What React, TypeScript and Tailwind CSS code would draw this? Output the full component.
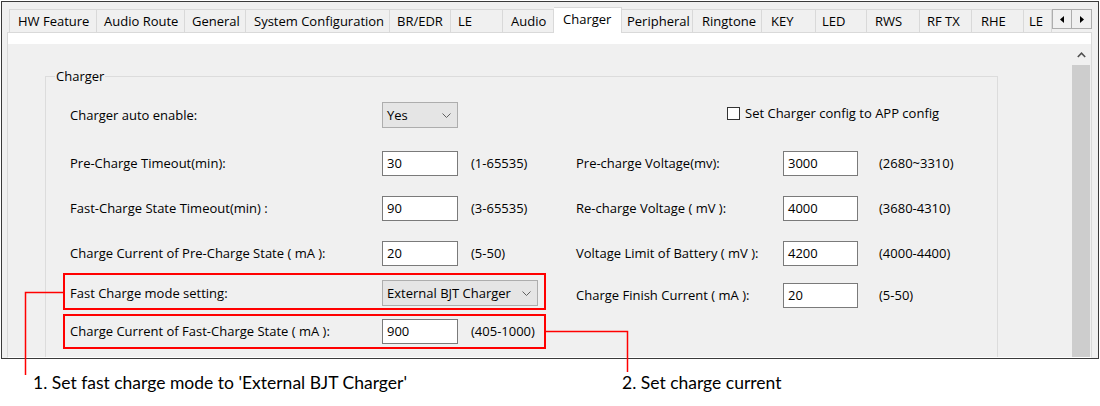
import React from "react";

const tabs: { label: string; cls: string }[] = [
  { label: "HW Feature", cls: "w-[88px] pl-[8px] border-l" },
  { label: "Audio Route", cls: "w-[88px] pl-[7px]" },
  { label: "General", cls: "w-[61px] pl-[7px]" },
  { label: "System Configuration", cls: "w-[144px] pl-[8px]" },
  { label: "BR/EDR", cls: "w-[61px] pl-[7px]" },
  { label: "LE", cls: "w-[52px] pl-[7px]" },
  { label: "Audio", cls: "w-[51px] pl-[8px]" },
];
const tabs2: { label: string; cls: string }[] = [
  { label: "Peripheral", cls: "w-[71px] pl-[5px]" },
  { label: "Ringtone", cls: "w-[69px] pl-[9px]" },
  { label: "KEY", cls: "w-[54px] pl-[9px]" },
  { label: "LED", cls: "w-[51px] pl-[6px]" },
  { label: "RWS", cls: "w-[53px] pl-[8px]" },
  { label: "RF TX", cls: "w-[52px] pl-[7px]" },
  { label: "RHE", cls: "w-[52px] pl-[9px]" },
  { label: "LE", cls: "w-[28px] pl-[5px]" },
];

function Tab({ label, cls }: { label: string; cls: string }) {
  return (
    <div
      className={`${cls} h-[23px] shrink-0 flex items-center overflow-hidden whitespace-nowrap border-t border-r border-[#d9d9d9] bg-[#f0f0f0]`}
    >
      {label}
    </div>
  );
}

function Input({ value, w }: { value: string; w: string }) {
  return (
    <div
      className={`${w} h-[25px] shrink-0 bg-white border border-[#7a7a7a] flex items-center pl-[4px]`}
    >
      {value}
    </div>
  );
}

function Combo({ value, w }: { value: string; w: string }) {
  return (
    <div
      className={`${w} h-[26px] shrink-0 bg-[#e5e5e5] border border-[#adadad] flex items-center justify-between pl-[4px] pr-[6px]`}
    >
      <span>{value}</span>
      <svg width="9" height="5" viewBox="0 0 9 5">
        <path d="M0.5 0.5 L4.5 4.5 L8.5 0.5" fill="none" stroke="#606060" strokeWidth="1" />
      </svg>
    </div>
  );
}

function Row({
  mt,
  label,
  value,
  range,
  rLabel,
  rValue,
  rRange,
}: {
  mt: string;
  label: string;
  value: string;
  range: string;
  rLabel: string;
  rValue: string;
  rRange: string;
}) {
  return (
    <div className={`${mt} flex items-center h-[25px] pl-[24px]`}>
      <div className="w-[312px] shrink-0">{label}</div>
      <div className="w-[194px] shrink-0 flex items-center">
        <Input value={value} w="w-[76px]" />
        <span className="ml-[13px]">{range}</span>
      </div>
      <div className="w-[207px] shrink-0">{rLabel}</div>
      <Input value={rValue} w="w-[75px]" />
      <span className="ml-[21px]">{rRange}</span>
    </div>
  );
}

export default function App() {
  return (
    <div className="relative w-[1100px] h-[406px] bg-white overflow-hidden text-black">
      {/* Window */}
      <div className="ml-[1px] mt-[1px] w-[1098px] h-[358px] border border-[#3a3a3a] bg-[#f0f0f0] flex flex-col font-['Open_Sans','Noto_Sans',sans-serif] text-[13px] leading-[17px]">
        {/* Tab strip */}
        <div className="h-[30px] shrink-0 flex items-end pl-[7px]">
          {tabs.map((t) => (
            <Tab key={t.label} label={t.label} cls={t.cls} />
          ))}
          <div className="relative z-10 w-[68px] h-[26px] -mb-[1px] shrink-0 flex items-center pb-[2px] pl-[9px] bg-white border-t border-r border-[#d9d9d9]">
            Charger
          </div>
          {tabs2.map((t, i) => (
            <Tab key={t.label + i} label={t.label} cls={t.cls} />
          ))}
          <div className="flex mb-[3px] shrink-0">
            <div className="w-[20px] h-[20px] border border-[#adadad] bg-[#f0f0f0] flex items-center justify-center">
              <svg width="4" height="7" viewBox="0 0 4 7">
                <path d="M4 0 L0 3.5 L4 7 Z" fill="#000" />
              </svg>
            </div>
            <div className="w-[20px] h-[20px] border-t border-r border-b border-[#adadad] bg-[#f0f0f0] flex items-center justify-center">
              <svg width="4" height="7" viewBox="0 0 4 7">
                <path d="M0 0 L4 3.5 L0 7 Z" fill="#000" />
              </svg>
            </div>
          </div>
        </div>

        {/* Tab panel */}
        <div className="ml-[5px] w-[1085px] flex-1 flex flex-col border-t border-l border-r border-b border-[#d9d9d9] border-b-white overflow-hidden">
          <div className="h-[11px] shrink-0 bg-white" />
          <div className="flex-1 flex overflow-hidden">
            {/* Form area */}
            <div className="flex-1 overflow-hidden">
              <fieldset className="ml-[37px] mt-[24px] w-[953px] h-[330px] border border-[#dcdcdc]">
                <legend className="ml-[9px] px-[1px] leading-[16px]">Charger</legend>
                <div className="pt-[18px]">
                  {/* Row 1 */}
                  <div className="flex items-center h-[26px] pl-[24px]">
                    <div className="w-[312px] shrink-0">Charger auto enable:</div>
                    <Combo value="Yes" w="w-[76px]" />
                    <div className="ml-[269px] self-start mt-[3px] flex items-center">
                      <div className="w-[13px] h-[13px] border border-[#333333] bg-white" />
                      <span className="ml-[5px]">Set Charger config to APP config</span>
                    </div>
                  </div>
                  <Row
                    mt="mt-[23px]"
                    label="Pre-Charge Timeout(min):"
                    value="30"
                    range="(1-65535)"
                    rLabel="Pre-charge Voltage(mv):"
                    rValue="3000"
                    rRange="(2680~3310)"
                  />
                  <Row
                    mt="mt-[20px]"
                    label="Fast-Charge State Timeout(min) :"
                    value="90"
                    range="(3-65535)"
                    rLabel="Re-charge Voltage ( mV ):"
                    rValue="4000"
                    rRange="(3680-4310)"
                  />
                  <Row
                    mt="mt-[20px]"
                    label="Charge Current of Pre-Charge State ( mA ):"
                    value="20"
                    range="(5-50)"
                    rLabel="Voltage Limit of Battery ( mV ):"
                    rValue="4200"
                    rRange="(4000-4400)"
                  />
                  {/* Row 5 */}
                  <div className="mt-[7px] flex items-start pl-[17px]">
                    <div className="w-[483px] h-[37px] shrink-0 border-2 border-[#ff0000] flex items-center pt-[3px] pl-[5px]">
                      <div className="w-[312px] shrink-0">Fast Charge mode setting:</div>
                      <Combo value="External BJT Charger" w="w-[156px]" />
                    </div>
                    <div className="mt-[10px] flex items-center">
                      <div className="ml-[30px] w-[207px] shrink-0">Charge Finish Current ( mA ):</div>
                      <Input value="20" w="w-[75px]" />
                      <span className="ml-[21px]">(5-50)</span>
                    </div>
                  </div>
                  {/* Row 6 */}
                  <div className="mt-[4px] flex items-center pl-[17px]">
                    <div className="w-[483px] h-[35px] shrink-0 border-2 border-[#ff0000] flex items-center pl-[5px]">
                      <div className="w-[312px] shrink-0">Charge Current of Fast-Charge State ( mA ):</div>
                      <Input value="900" w="w-[76px]" />
                      <span className="ml-[13px]">(405-1000)</span>
                    </div>
                  </div>
                </div>
              </fieldset>
            </div>
            {/* Vertical scrollbar */}
            <div className="w-[21px] shrink-0 flex flex-col pl-[2px] pr-[1px] bg-[#f0f0f0]">
              <div className="h-[21px] shrink-0 flex items-center justify-center">
                <svg width="9" height="6" viewBox="0 0 9 6">
                  <path d="M0.8 5 L4.5 1.2 L8.2 5" fill="none" stroke="#505050" strokeWidth="1.6" />
                </svg>
              </div>
              <div className="flex-1 bg-[#cdcdcd]" />
            </div>
          </div>
        </div>
      </div>

      {/* Annotations */}
      <div className="mt-[13px] flex font-['Lato',sans-serif] text-[17.5px] leading-[22px]">
        <div className="pl-[33px] w-[622px] shrink-0">1. Set fast charge mode to 'External BJT Charger'</div>
        <div>2. Set charge current</div>
      </div>

      {/* Leader lines */}
      <svg
        className="absolute top-0 left-0 pointer-events-none"
        width="1100"
        height="406"
        viewBox="0 0 1100 406"
      >
        <polyline points="63,292.5 25.5,292.5 25.5,375" fill="none" stroke="#ff0000" strokeWidth="1.5" />
        <polyline points="545,331.5 627.5,331.5 627.5,372" fill="none" stroke="#ff0000" strokeWidth="1.5" />
      </svg>
    </div>
  );
}
